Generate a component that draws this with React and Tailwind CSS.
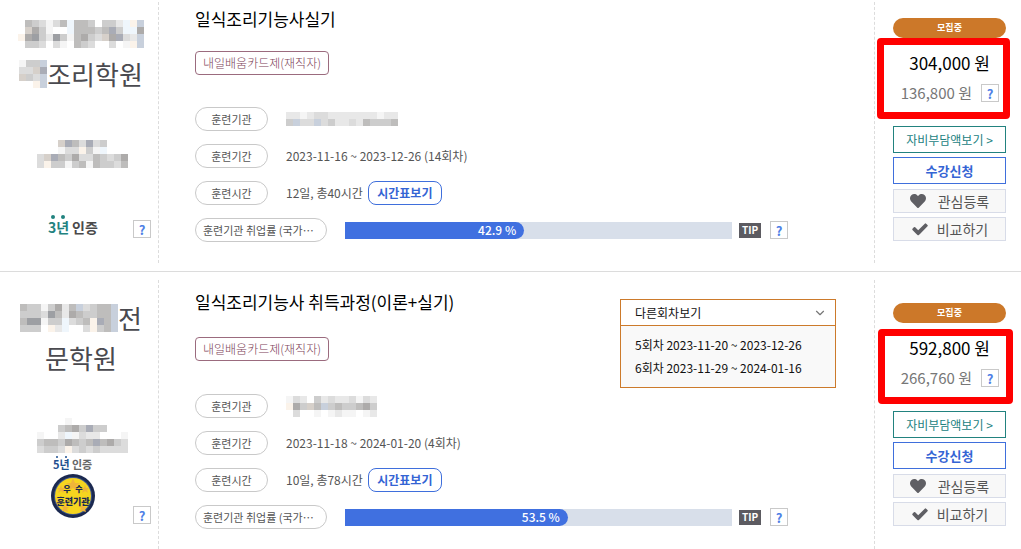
import React from 'react';
import clsx from 'clsx';
import { ChevronDown } from 'lucide-react';
import { FaHeart } from 'react-icons/fa';

const CELL = 7;

const TONES = {
  1: '#f5f5f5',
  2: '#e8e8e8',
  3: '#dcdcdc',
  4: '#cdcdcd',
  5: '#bebdbc',
  6: '#adabaa',
  7: '#9d9fa3',
  b: '#eff6fc',
  c: '#c8d0dc',
  o: '#fbf3ea',
  p: '#a9acb6',
  t: '#d6d0ca',
};

const courses = [
  {
    id: 1,
    title: '일식조리기능사실기',
    academy: [
      { mask: ['.543135b554.442boc', '.t641..b55545p4bb6', 'o67427415643t6p32c', '.443.31.543..3.1oc'] },
      { mask: ['144c', '33tp', 't43c', '..oc'], text: '조리학원' },
    ],
    stamp: ['...tp53p34...', '...133o41b...', '3tp5463354346', '3o44145154435'],
    provider: ['2212332222222122', '4c33c34223254445'],
    period: '2023-11-16 ~ 2023-12-26 (14회차)',
    hours: '12일, 총40시간',
    rate: '42.9 %',
    fill: 46.3,
    price: '304,000 원',
    selfPay: '136,800 원',
    years: 3,
  },
  {
    id: 2,
    title: '일식조리기능사 취득과정(이론+실기)',
    academy: [
      { mask: ['54414625c3455c', '4443752654455c', '577144b345op5c', '444.o2b..3o45c'], text: '전' },
      { text: '문학원' },
    ],
    stamp: ['....1........', '...4564p44...', '1..2b1322...1', '45546545p5643', '3443o34343333'],
    provider: ['132.423223132', 'o64t5c4544564', '.3..1.1211.12'],
    period: '2023-11-18 ~ 2024-01-20 (4회차)',
    hours: '10일, 총78시간',
    rate: '53.5 %',
    fill: 57.6,
    price: '592,800 원',
    selfPay: '266,760 원',
    years: 5,
    rounds: ['5회차 2023-11-20 ~ 2023-12-26', '6회차 2023-11-29 ~ 2024-01-16'],
  },
];

const Mosaic = ({ rows }) => {
  const width = rows[0].length * CELL;
  const height = rows.length * CELL;
  return (
    <svg width={width} height={height} viewBox={`0 0 ${width} ${height}`} shapeRendering="crispEdges" aria-hidden="true">
      {rows.map((row, y) =>
        row.split('').map((tone, x) =>
          TONES[tone] ? <rect key={`${x}-${y}`} x={x * CELL} y={y * CELL} width={CELL} height={CELL} fill={TONES[tone]} /> : null
        )
      )}
    </svg>
  );
};

const CheckIcon = () => (
  <svg width="18" height="18" viewBox="0 0 1792 1792" fill="#5f5f64" aria-hidden="true">
    <path d="M1671 566q0 40-28 68l-724 724-136 136q-28 28-68 28t-68-28l-136-136-362-362q-28-28-28-68t28-68l136-136q28-28 68-28t68 28l294 295 656-657q28-28 68-28t68 28l136 136q28 28 28 68z" />
  </svg>
);

const HelpButton = () => (
  <button type="button" className="flex size-[18px] shrink-0 items-center justify-center border border-[#c9c9c9] bg-white text-[13px] font-bold leading-none text-[#4f7fe6]">
    ?
  </button>
);

const Certified3 = () => (
  <svg width="52" height="24" viewBox="0 0 52 24">
    <circle cx="5" cy="3" r="2" fill="#22827f" />
    <circle cx="15" cy="3" r="2" fill="#22827f" />
    <text x="0" y="19" fontSize="14" fontWeight="700" fill="#22827f">3년</text>
    <text x="24" y="19" fontSize="14" fontWeight="700" fill="#4a4a4a">인증</text>
  </svg>
);

const Certified5 = () => (
  <svg width="46" height="64" viewBox="0 0 46 64">
    <circle cx="6" cy="2" r="1" fill="#1f5090" />
    <circle cx="15" cy="2" r="1" fill="#1f5090" />
    <text x="2" y="14" fontSize="11" fontWeight="700" fill="#1f5090">5년</text>
    <text x="21" y="14" fontSize="11" fontWeight="700" fill="#666">인증</text>
    <circle cx="22" cy="41" r="22" fill="#1b2950" />
    <circle cx="22" cy="41" r="19" fill="#40598c" />
    <circle cx="22" cy="41" r="18" fill="#f6d51f" />
    <g fill="#efb53a" transform="translate(-1 -1)">
      <path d="M23 24l2 5 5 0-4 3 2 5-5-3-5 3 2-5-4-3 5 0z" />
      <path d="M11 31l1 3 3 0-2 2 1 3-3-2-3 2 1-3-2-2 3 0z" />
      <path d="M35 31l1 3 3 0-2 2 1 3-3-2-3 2 1-3-2-2 3 0z" />
      <path d="M14 50l2 3 3 0-2 2 1 3-3-1-3 0 1-3-2-2 3 0z" />
      <path d="M32 50l2 3 3 0-2 2 1 3-3-1-3 0 1-3-2-2 3 0z" />
    </g>
    <text x="16" y="37" textAnchor="middle" fontSize="8" fontWeight="900" fill="#1b2950">우</text>
    <text x="28" y="37" textAnchor="middle" fontSize="8" fontWeight="900" fill="#1b2950">수</text>
    <text x="22" y="50" textAnchor="middle" fontSize="9" fontWeight="900" fill="#1b2950">훈련기관</text>
  </svg>
);

const Pill = ({ children, wide }) => (
  <span
    className={clsx(
      'flex h-6 shrink-0 items-center rounded-full border border-[#c9c9c9] text-[11px] text-[#555]',
      wide ? 'w-[132px] pl-[7px]' : 'w-[73px] justify-center'
    )}
  >
    {children}
  </span>
);

const RoundMenu = ({ rounds }) => (
  <div className="mt-[9px] w-[216px] border border-[#cc7a2b] text-xs text-[#111]">
    <button type="button" aria-expanded="true" className="flex h-[26px] w-full items-center justify-between border-b border-[#cc7a2b] bg-white pr-2 pl-[14px]">
      다른회차보기
      <ChevronDown size={14} strokeWidth={2} className="text-[#777]" />
    </button>
    <ul className="bg-[#f9f9f9] px-[14px] pt-[7px] pb-2">
      {rounds.map(r => (
        <li key={r} className="leading-[23px]">{r}</li>
      ))}
    </ul>
  </div>
);

const Academy = ({ course, first }) => (
  <div className={clsx('flex w-[159px] shrink-0 flex-col border-r border-dashed border-[#dcdcdc]', first ? 'pt-3' : 'pt-[18px]')}>
    <div className="pl-1 text-[26px] leading-10 text-[#4a4a4f]">
      {course.academy.map((line, i) => (
        <div key={i} className="flex h-10 items-center justify-center">
          {line.mask && <Mosaic rows={line.mask} />}
          {line.text}
        </div>
      ))}
    </div>
    <div className={clsx('flex justify-center pl-[6px]', first ? 'pt-[46px]' : 'pt-10')}>
      <Mosaic rows={course.stamp} />
    </div>
    <div className={clsx('flex items-end pr-[7px] pl-[14px]', first ? 'pt-[46px]' : 'pt-[2px]')}>
      <div className={clsx('flex flex-1 justify-center', !first && 'pb-[5px]')}>{course.years === 3 ? <Certified3 /> : <Certified5 />}</div>
      <HelpButton />
    </div>
  </div>
);

const Details = ({ course, first }) => (
  <div className={clsx('min-w-0 flex-1 pr-[38px] pl-9', first ? 'pt-[5px]' : 'pt-[10px]')}>
    <div className={clsx('flex items-start justify-between', first ? 'pb-8' : 'pb-[6px]')}>
      <div className={clsx('flex flex-col items-start', first ? 'gap-5' : 'gap-[23px]')}>
        <h2 className="text-[17px] leading-6 text-black">{course.title}</h2>
        <span className="flex h-6 items-center rounded border border-[#9b6b7e] px-[7px] text-xs font-light text-[#7d3f58]">내일배움카드제(재직자)</span>
      </div>
      {course.rounds && <RoundMenu rounds={course.rounds} />}
    </div>

    <dl className="flex flex-col gap-[13px] text-xs text-[#555]">
      <div className="flex items-center gap-[18px]">
        <dt><Pill>훈련기관</Pill></dt>
        <dd><Mosaic rows={course.provider} /></dd>
      </div>
      <div className="flex items-center gap-[18px]">
        <dt><Pill>훈련기간</Pill></dt>
        <dd>{course.period}</dd>
      </div>
      <div className="flex items-center gap-[18px]">
        <dt><Pill>훈련시간</Pill></dt>
        <dd className="flex items-center gap-[5px]">
          {course.hours}
          <button type="button" className="h-6 w-[74px] rounded-lg border border-[#3f6fdc] font-bold text-[#3464d4]">시간표보기</button>
        </dd>
      </div>
      <div className="flex items-center gap-[18px] pr-12">
        <dt><Pill wide>훈련기관 취업률 (국가…</Pill></dt>
        <dd className="flex flex-1 items-center">
          <div className="h-[17px] flex-1 bg-[#d8dfea]">
            <div className="flex h-full items-center justify-end rounded-r-full bg-[#4070e0] pr-2 font-medium text-white" style={{ width: `${course.fill}%` }}>
              {course.rate}
            </div>
          </div>
          <span className="mr-[9px] ml-[7px] flex h-[15px] w-[22px] items-center justify-center bg-[#5c5b61] text-[10px] font-bold text-white">TIP</span>
          <HelpButton />
        </dd>
      </div>
    </dl>
  </div>
);

const Actions = ({ course, first }) => (
  <div className={clsx('w-[147px] shrink-0 border-l border-dashed border-[#dcdcdc] pr-[15px] pl-[18px]', first ? 'pt-4' : 'pt-[23px]')}>
    <div className="flex h-5 items-center justify-center rounded-full bg-[#cc7829] text-[9px] font-bold text-white">모집중</div>
    <div className="relative flex h-[88px] flex-col items-end pt-[13px]">
      <strong className="pr-4 text-[17px] font-normal leading-6 text-black">{course.price}</strong>
      <div className="mt-[6px] flex items-center gap-[9px] pr-[7px] text-[15px] leading-6 text-[#777]">
        {course.selfPay}
        <HelpButton />
      </div>
      <div
        className={clsx(
          'pointer-events-none absolute rounded-sm border-[7px] border-[#ff0000]',
          first ? 'top-0 -right-1 bottom-[7px] -left-4' : 'top-[6px] -right-[7px] bottom-[7px] -left-[15px]'
        )}
      />
    </div>
    <div className="flex flex-col gap-1">
      <button type="button" className="h-[27px] border border-[#22827f] text-xs text-[#22827f]">자비부담액보기 &gt;</button>
      <button type="button" className="h-[27px] border border-[#3f6fdc] text-[13px] font-bold text-[#3464d4]">수강신청</button>
      <button type="button" className="mt-px flex h-6 items-center justify-center gap-3 border border-[#d8dce8] bg-[#f8f8f8] text-sm text-[#555]">
        <FaHeart size={16} className="text-[#5f5f64]" />
        관심등록
      </button>
      <button type="button" className="flex h-6 items-center justify-center gap-2 border border-[#d8dce8] bg-[#f8f8f8] text-sm text-[#555]">
        <CheckIcon />
        비교하기
      </button>
    </div>
  </div>
);

const App = () => (
  <main className="flex min-h-screen flex-col bg-white font-['Noto_Sans_CJK_KR',sans-serif]">
    {courses.map((course, i) => (
      <article key={course.id} className={clsx('flex', i === 0 ? 'border-b border-[#dcdcdc] pt-[2px] pb-2' : 'flex-1 pt-2')}>
        <div className={clsx('flex flex-1', i === 0 && 'min-h-[261px]')}>
          <Academy course={course} first={i === 0} />
          <Details course={course} first={i === 0} />
          <Actions course={course} first={i === 0} />
        </div>
      </article>
    ))}
  </main>
);

export default App;
